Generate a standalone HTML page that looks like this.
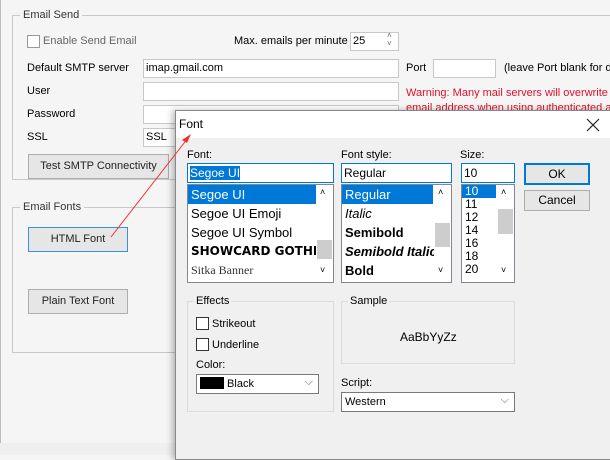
<!DOCTYPE html>
<html><head><style>
*{box-sizing:border-box;margin:0;padding:0}
body{width:610px;height:455px;overflow:hidden;background:#f5f5f5;font-family:"Liberation Sans",sans-serif;font-size:11px;color:#000;position:relative}
.a{position:absolute;white-space:nowrap}
.grp{position:absolute;border:1px solid #c8c8c8}
.leg{position:absolute;background:#f5f5f5;padding:0 3px;color:#333;font-size:11px}
.in{position:absolute;background:#fff;border:1px solid #c8c8c8;padding:2px 2px;font-size:11px}
.btn{position:absolute;background:#e6e6e6;border:1px solid #adadad;text-align:center;font-size:11px;color:#222}
.dlg .leg{background:#f0f0f0}
.list{position:absolute;background:#fff;border:1px solid #828790;overflow:hidden}
.it{height:19px;line-height:19px;padding-left:3px;font-size:13px}
.sel{background:#0078d7;color:#fff}
.sb{position:absolute;right:0;top:0;bottom:0;width:17px;background:#fff}
.thumb{position:absolute;left:1px;width:15px;background:#cdcdcd}
.chk{position:absolute;width:13px;height:13px;border:1px solid #333;background:#fff}
</style></head><body>
<div class="a" style="left:0;top:0;width:1px;height:455px;background:#bbb"></div>
<div class="a" style="left:0;top:443px;width:610px;height:12px;background:#efefef"></div>

<div class="grp" style="left:12px;top:15px;width:620px;height:165px"></div>
<div class="leg" style="left:20px;top:9px">Email Send</div>
<div class="a" style="left:27px;top:35px;width:13px;height:13px;border:1px solid #999;background:#fff"></div>
<div class="a" style="left:43px;top:35px;color:#666">Enable Send Email</div>
<div class="a" style="left:234px;top:35px">Max. emails per minute</div>
<div class="in" style="left:350px;top:32px;width:49px;height:19px">25</div>
<div class="a" style="left:387px;top:32px;font-size:8px;color:#666;line-height:8px">˄<br>˅</div>
<div class="a" style="left:27px;top:62px">Default SMTP server</div>
<div class="in" style="left:143px;top:59px;width:256px;height:19px">imap.gmail.com</div>
<div class="a" style="left:406px;top:62px">Port</div>
<div class="in" style="left:433px;top:59px;width:63px;height:19px"></div>
<div class="a" style="left:504px;top:62px">(leave Port blank for d</div>
<div class="a" style="left:27px;top:85px">User</div>
<div class="in" style="left:143px;top:82px;width:256px;height:19px"></div>
<div class="a" style="left:406px;top:86px;color:#e0102a;line-height:15px">Warning: Many mail servers will overwrite t<br>email address when using authenticated ac</div>
<div class="a" style="left:27px;top:108px">Password</div>
<div class="in" style="left:143px;top:105px;width:256px;height:19px"></div>
<div class="a" style="left:27px;top:131px">SSL</div>
<div class="in" style="left:143px;top:128px;width:256px;height:19px">SSL</div>
<div class="btn" style="left:28px;top:154px;width:141px;height:25px;line-height:23px">Test SMTP Connectivity</div>

<div class="grp" style="left:12px;top:207px;width:300px;height:146px"></div>
<div class="leg" style="left:20px;top:201px">Email Fonts</div>
<div class="btn" style="left:28px;top:227px;width:100px;height:25px;line-height:23px;border-color:#3c8fe8">HTML Font</div>
<div class="btn" style="left:28px;top:289px;width:100px;height:25px;line-height:23px">Plain Text Font</div>

<div class="a dlg" style="left:175px;top:110px;width:440px;height:350px;background:#f0f0f0;border:1px solid #888;box-shadow:-3px 0 6px rgba(0,0,0,.25)">
 <div class="a" style="left:0;top:0;width:440px;height:27px;background:#fff"></div>
 <div class="a" style="left:3px;top:6px;font-size:12px">Font</div>
 <svg class="a" style="left:410px;top:7px" width="14" height="14"><path d="M1 1L13 13M13 1L1 13" stroke="#222" stroke-width="1.2"/></svg>
</div>
<div class="a" style="left:187px;top:149px">Font:</div>
<div class="in" style="left:187px;top:163px;width:147px;height:20px;border-color:#0078d7;padding:2px 2px;font-size:12px"><span style="background:#0078d7;color:#fff">Segoe UI</span></div>
<div class="list" style="left:187px;top:184px;width:147px;height:99px">
 <div class="it sel" style="width:128px">Segoe UI</div><div class="it">Segoe UI Emoji</div><div class="it">Segoe UI Symbol</div><div class="it" style="font-weight:900;font-family:'DejaVu Sans';font-size:12px">SHOWCARD GOTHI</div><div class="it" style="font-family:'Liberation Serif';font-size:12px;color:#333">Sitka Banner</div>
 <div class="sb"><div class="a" style="left:4px;top:2px;font-size:9px">˄</div><div class="thumb" style="top:55px;height:19px"></div><div class="a" style="left:4px;top:80px;font-size:9px">˅</div></div>
</div>
<div class="a" style="left:341px;top:149px">Font style:</div>
<div class="in" style="left:341px;top:163px;width:111px;height:20px;border-color:#0078d7;font-size:12px">Regular</div>
<div class="list" style="left:341px;top:184px;width:111px;height:99px">
 <div class="it sel" style="width:91px">Regular</div><div class="it" style="font-style:italic">Italic</div><div class="it" style="font-weight:bold">Semibold</div><div class="it" style="font-weight:bold;font-style:italic">Semibold Italic</div><div class="it" style="font-weight:bold">Bold</div>
 <div class="sb"><div class="a" style="left:4px;top:2px;font-size:9px">˄</div><div class="thumb" style="top:38px;height:24px"></div><div class="a" style="left:4px;top:80px;font-size:9px">˅</div></div>
</div>
<div class="a" style="left:460px;top:149px">Size:</div>
<div class="in" style="left:461px;top:163px;width:54px;height:20px;border-color:#0078d7;font-size:12px">10</div>
<div class="list" style="left:461px;top:184px;width:54px;height:99px">
 <div class="it sel" style="height:13px;line-height:13px;width:34px;font-size:12px">10</div><div class="it" style="height:13px;line-height:13px;font-size:12px">11</div><div class="it" style="height:13px;line-height:13px;font-size:12px">12</div><div class="it" style="height:13px;line-height:13px;font-size:12px">14</div><div class="it" style="height:13px;line-height:13px;font-size:12px">16</div><div class="it" style="height:13px;line-height:13px;font-size:12px">18</div><div class="it" style="height:13px;line-height:13px;font-size:12px">20</div>
 <div class="sb"><div class="a" style="left:4px;top:2px;font-size:9px">˄</div><div class="thumb" style="top:24px;height:25px"></div><div class="a" style="left:4px;top:80px;font-size:9px">˅</div></div>
</div>
<div class="btn" style="left:524px;top:163px;width:66px;height:22px;line-height:18px;border:2px solid #0078d7;font-size:12px;color:#000">OK</div>
<div class="btn" style="left:524px;top:190px;width:66px;height:21px;line-height:19px;font-size:12px;color:#000">Cancel</div>

<div class="a" style="left:187px;top:301px;width:147px;height:111px;border:1px solid #dcdcdc"></div>
<div class="leg" style="left:194px;top:295px;background:#f0f0f0;padding:0 2px;color:#000">Effects</div>
<div class="chk" style="left:196px;top:317px"></div><div class="a" style="left:212px;top:318px">Strikeout</div>
<div class="chk" style="left:196px;top:338px"></div><div class="a" style="left:212px;top:339px">Underline</div>
<div class="a" style="left:196px;top:359px">Color:</div>
<div class="in" style="left:196px;top:374px;width:123px;height:20px;border-color:#7a7a7a;padding:2px 3px"><span style="display:inline-block;width:24px;height:12px;background:#000;vertical-align:-2px"></span> Black<span style="position:absolute;right:5px;top:1px;color:#666">⌵</span></div>
<div class="a" style="left:341px;top:301px;width:174px;height:63px;border:1px solid #dcdcdc"></div>
<div class="leg" style="left:348px;top:295px;background:#f0f0f0;padding:0 2px;color:#000">Sample</div>
<div class="a" style="left:400px;top:330px;font-size:12px">AaBbYyZz</div>
<div class="a" style="left:341px;top:377px">Script:</div>
<div class="in" style="left:341px;top:392px;width:174px;height:20px;border-color:#7a7a7a;padding:3px 3px">Western<span style="position:absolute;right:5px;top:1px;color:#666">⌵</span></div>

<svg class="a" style="left:0;top:0" width="610" height="455"><path d="M111 237L188 138" stroke="#f03030" stroke-width="1"/><path d="M191 134L182 140L187 143Z" fill="#f03030"/></svg>
</body></html>
